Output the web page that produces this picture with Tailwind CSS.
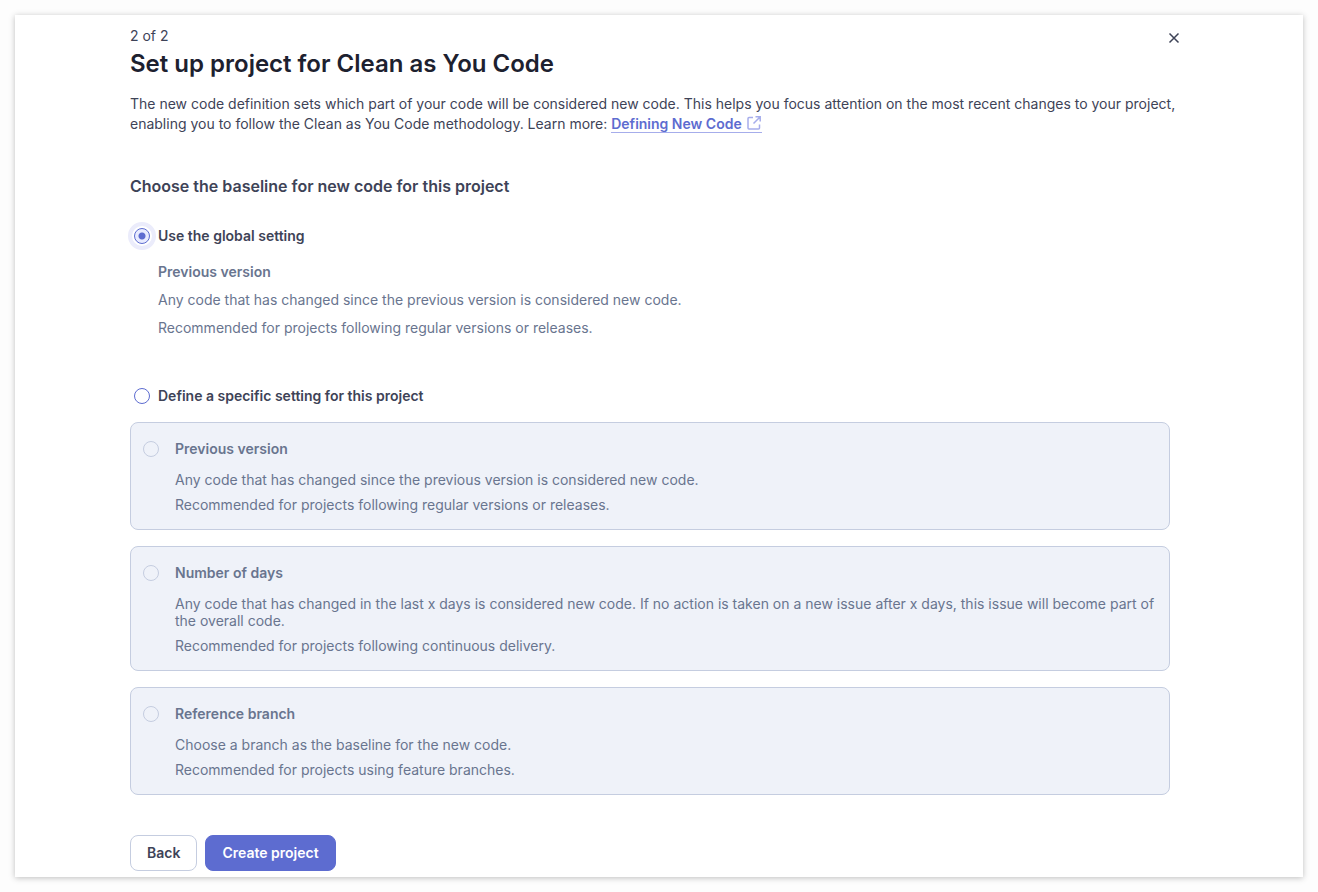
<!DOCTYPE html>
<html lang="en">
<head>
  <meta charset="UTF-8" />
  <meta name="viewport" content="width=device-width, initial-scale=1.0" />
  <title>Set up project for Clean as You Code</title>
  <script src="https://cdn.jsdelivr.net/npm/@tailwindcss/browser@4"></script>
</head>
<body class="bg-[#fdfdfd] p-[15px] font-['Inter','Liberation_Sans',sans-serif] text-sm leading-5 text-[#3e4357]">
  <main class="bg-white px-6 pt-[11px] pb-[6px] shadow-[0_1px_6px_rgba(0,0,0,0.25)]">
    <div class="max-w-[1058px] mx-auto">
      <header class="flex items-start justify-between">
        <div>
          <p>2 of 2</p>
          <h1 class="mt-[2px] text-2xl leading-8 font-semibold text-[#1d212f]">Set up project for Clean as You Code</h1>
        </div>
        <button type="button" aria-label="Close" class="w-7 h-6 flex items-center justify-center">
          <svg class="w-4 h-4" viewBox="0 0 16 16" fill="none" stroke="currentColor" stroke-width="1.5"><path d="M3.5 3.5l9 9M12.5 3.5l-9 9" /></svg>
        </button>
      </header>

      <p class="mt-[14px]">
        The new code definition sets which part of your code will be considered new code. This helps you focus attention on the most recent changes to your project, enabling you to follow the Clean as You Code methodology. Learn more:
        <a href="#" class="border-b border-[#a6adeb] font-semibold text-[#5d6cd0]">Defining New Code<svg class="inline w-4 h-4 ml-1 -mt-1 text-[#a6adeb]" viewBox="0 0 16 16" fill="none" stroke="currentColor" stroke-width="1.5"><path d="M7 2.5H3a1 1 0 0 0-1 1V13a1 1 0 0 0 1 1h9.5a1 1 0 0 0 1-1V9.5M9.5 1.8h4.7v4.7M14 2L7.5 8.5" /></svg></a>
      </p>

      <form>
        <h2 class="mt-10 text-base leading-6 font-semibold">Choose the baseline for new code for this project</h2>

        <!-- Global setting -->
        <div class="mt-7 flex items-center gap-2 pl-1">
          <input id="global" type="radio" name="setting" checked class="appearance-none w-4 h-4 rounded-full border border-[#5d6cd0] bg-white checked:bg-[radial-gradient(circle,#5d6cd0_3px,#e8ebff_4px)] checked:outline-4 checked:outline-offset-2 checked:outline-[#ebecfb]" />
          <label for="global" class="font-semibold">Use the global setting</label>
        </div>
        <div class="mt-4 pl-7 space-y-2 text-[#69758f]">
          <p class="font-semibold">Previous version</p>
          <p>Any code that has changed since the previous version is considered new code.</p>
          <p>Recommended for projects following regular versions or releases.</p>
        </div>

        <!-- Specific setting -->
        <div class="mt-12 flex items-center gap-2 pl-1">
          <input id="specific" type="radio" name="setting" class="appearance-none w-4 h-4 rounded-full border border-[#5d6cd0] bg-white checked:bg-[radial-gradient(circle,#5d6cd0_3px,#e8ebff_4px)] checked:outline-4 checked:outline-offset-2 checked:outline-[#ebecfb]" />
          <label for="specific" class="font-semibold">Define a specific setting for this project</label>
        </div>

        <div class="mt-4 max-w-[1040px] space-y-4 text-[#69758f]">
          <div class="flex items-start gap-4 rounded-lg border border-[#c5cde0] bg-[#eff2f9] px-3 py-4">
            <input id="previous" type="radio" name="baseline" disabled class="appearance-none shrink-0 mt-[2px] w-4 h-4 rounded-full border border-[#c5cde0]" />
            <div>
              <label for="previous" class="block font-semibold">Previous version</label>
              <p class="mt-3 leading-[17px]">Any code that has changed since the previous version is considered new code.</p>
              <p class="mt-2 leading-[17px]">Recommended for projects following regular versions or releases.</p>
            </div>
          </div>
          <div class="flex items-start gap-4 rounded-lg border border-[#c5cde0] bg-[#eff2f9] px-3 py-4">
            <input id="days" type="radio" name="baseline" disabled class="appearance-none shrink-0 mt-[2px] w-4 h-4 rounded-full border border-[#c5cde0]" />
            <div>
              <label for="days" class="block font-semibold">Number of days</label>
              <p class="mt-3 leading-[17px]">Any code that has changed in the last x days is considered new code. If no action is taken on a new issue after x days, this issue will become part of the overall code.</p>
              <p class="mt-2 leading-[17px]">Recommended for projects following continuous delivery.</p>
            </div>
          </div>
          <div class="flex items-start gap-4 rounded-lg border border-[#c5cde0] bg-[#eff2f9] px-3 py-4">
            <input id="branch" type="radio" name="baseline" disabled class="appearance-none shrink-0 mt-[2px] w-4 h-4 rounded-full border border-[#c5cde0]" />
            <div>
              <label for="branch" class="block font-semibold">Reference branch</label>
              <p class="mt-3 leading-[17px]">Choose a branch as the baseline for the new code.</p>
              <p class="mt-2 leading-[17px]">Recommended for projects using feature branches.</p>
            </div>
          </div>
        </div>

        <div class="mt-10 flex gap-2">
          <button type="button" class="h-9 px-4 rounded-lg border border-[#c5cde0] bg-white font-semibold">Back</button>
          <button type="submit" class="h-9 px-4 rounded-lg border border-[#5d6cd0] bg-[#5d6cd0] font-semibold text-white">Create project</button>
        </div>
      </form>
    </div>
  </main>
</body>
</html>
